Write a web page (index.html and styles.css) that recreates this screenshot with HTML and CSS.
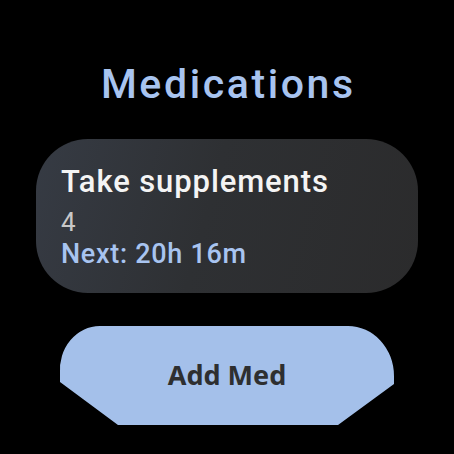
FILE: index.html
```html
<!DOCTYPE html>
<html lang="en">
<head>
    <meta charset="UTF-8">
    <meta name="viewport" content="width=device-width, initial-scale=1.0">
    <title>Medications</title>
    <link rel="stylesheet" href="styles.css">
</head>
<body>
<main class="screen">
    <h1 class="screen-title">Medications</h1>

    <!-- 복용 카드 -->
    <div class="med-card">
        <div class="med-name">Take supplements</div>
        <div class="med-count">4</div>
        <div class="med-next">Next: 20h 16m</div>
    </div>

    <button class="add-button">Add Med</button>
</main>
</body>
</html>
```

FILE: styles.css
```css
body {
    margin: 0; /* 기본 여백 제거 */
    background-color: #000; /* 워치 화면 배경 */
    font-family: Roboto, "Liberation Sans", sans-serif;
}

.screen {
    width: 454px;
    height: 454px;
    overflow: hidden;
    display: flex;
    flex-direction: column;
    align-items: center;
    padding-top: 62px;
    box-sizing: border-box;
}

.screen-title {
    margin: 0;
    font-size: 41px;
    line-height: 44px;
    font-weight: 500;
    letter-spacing: 2.6px;
    margin-right: -2.6px; /* 마지막 글자 간격 보정 */
    color: #a8c4f0; /* 제목 색상 */
}

.med-card {
    margin-top: 33px;
    width: 382px;
    box-sizing: border-box;
    padding: 25px 25px 24px;
    border-radius: 52px;
    background: linear-gradient(105deg, #363b44 0%, #2e3033 45%, #2b2b2c 100%);
    display: flex;
    flex-direction: column;
}

.med-name {
    font-size: 31px;
    line-height: 36px;
    font-weight: 500;
    letter-spacing: 0.9px;
    color: #f4f4f4;
}

.med-count {
    margin-top: 8px;
    font-size: 26px;
    line-height: 28px;
    color: #c8c8c8;
}

.med-next {
    margin-top: 3px;
    font-size: 27px;
    line-height: 30px;
    font-weight: 500;
    letter-spacing: 0.7px;
    color: #a8c4f0;
}

.add-button {
    margin-top: 33px;
    width: 334px;
    height: 99px;
    flex-shrink: 0;
    border: none;
    padding: 0;
    padding-bottom: 2px;
    background-color: #a4c0ea; /* 버튼 배경 */
    color: #2e2f30;
    font-family: "Noto Sans", "Open Sans", sans-serif;
    font-size: 27px;
    font-weight: 700;
    cursor: pointer;
    /* 화면 하단 곡면 효과 */
    clip-path: path('M 46 0 H 288 A 46 50 0 0 1 334 50 L 334 58 L 278 99 H 58 L 0 56 L 0 48 A 40 44 0 0 1 40 0 Z');
}
```
